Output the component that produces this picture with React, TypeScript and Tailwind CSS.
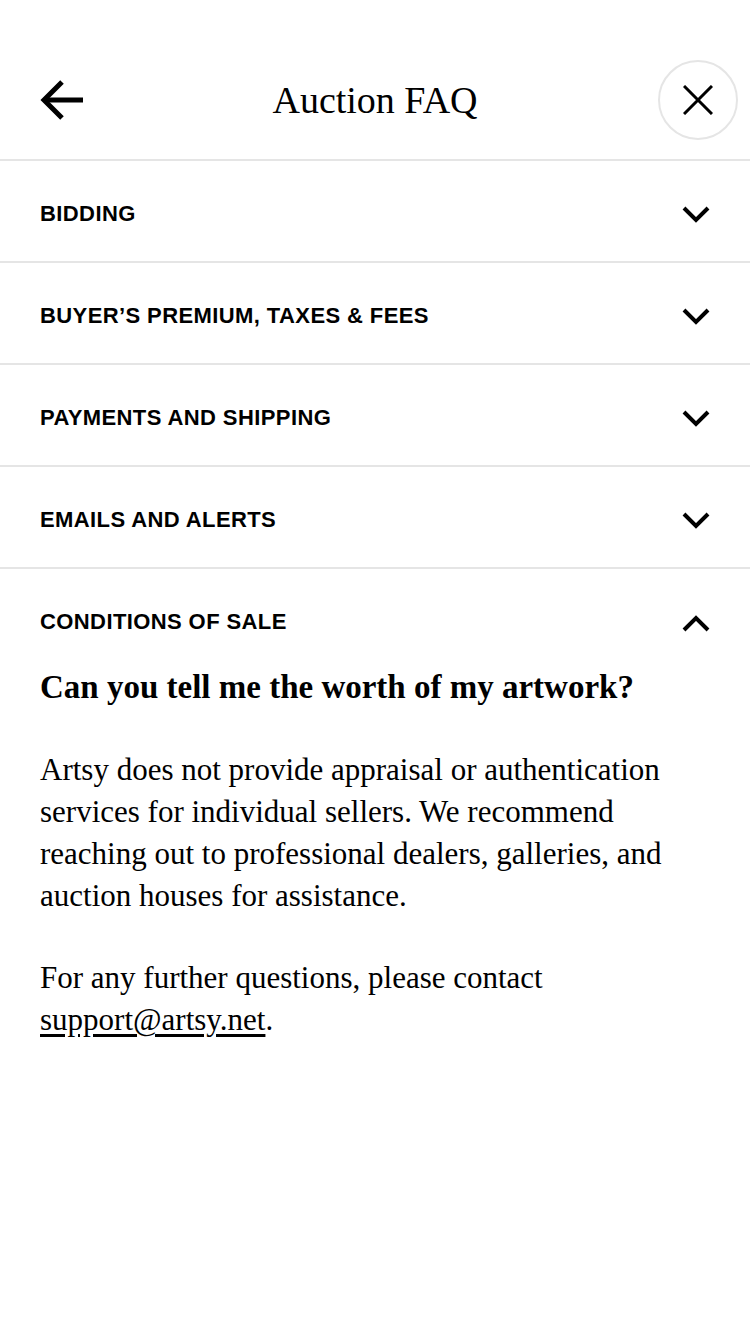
import React, { useState } from 'react'

const serif = "font-['Liberation_Serif',_'DejaVu_Serif',_serif]"
const sans = "font-['Liberation_Sans',_Arial,_sans-serif]"

const SECTIONS = [
  'Bidding',
  'Buyer’s Premium, Taxes & Fees',
  'Payments and Shipping',
  'Emails and Alerts',
  'Conditions of Sale'
]

const Chevron = ({ up }: { up?: boolean }) => (
  <svg width="30" height="20" viewBox="0 0 30 20" fill="none" className="mt-[3px]">
    <path
      d={up ? 'M3 17 L15 5 L27 17' : 'M3 3 L15 15 L27 3'}
      stroke="#000"
      strokeWidth="4"
    />
  </svg>
)

const App = () => {
  const [open, setOpen] = useState<number>(4)

  return (
    <div className="min-h-[1334px] w-[750px] bg-white pt-[40px] text-black">
      {/* header */}
      <div className="relative flex h-[121px] items-center justify-center border-b-2 border-[#e5e5e5]">
        <button className="absolute left-[40px] top-[40px]">
          <svg width="46" height="40" viewBox="0 0 46 40" fill="none">
            <path d="M43 20 H5" stroke="#000" strokeWidth="5" />
            <path d="M22 2 L4 20 L22 38" stroke="#000" strokeWidth="5" />
          </svg>
        </button>
        <h1 className={`${serif} text-[38px] leading-none`}>Auction FAQ</h1>
        <button className="absolute right-[12px] top-[20px] flex h-[80px] w-[80px] items-center justify-center rounded-full border-2 border-[#e5e5e5]">
          <svg width="30" height="30" viewBox="0 0 30 30" fill="none">
            <path d="M1 1 L29 29 M29 1 L1 29" stroke="#000" strokeWidth="3" />
          </svg>
        </button>
      </div>

      {SECTIONS.map((title, i) => {
        const isOpen = open === i
        return (
          <div key={title} className={isOpen ? '' : 'border-b-2 border-[#e5e5e5]'}>
            <button
              onClick={() => setOpen(isOpen ? -1 : i)}
              className="flex h-[100px] w-full items-center justify-between pl-[40px] pr-[39px] pt-[4px] text-left"
            >
              <span className={`${sans} text-[22px] font-bold uppercase tracking-[0.4px]`}>
                {title}
              </span>
              <Chevron up={isOpen} />
            </button>
            {isOpen && (
              <div className={`${serif} pl-[40px] pr-[50px]`}>
                <h2 className="-mt-[2px] text-[33px] font-bold leading-[40px]">
                  Can you tell me the worth of my artwork?
                </h2>
                <p className="mt-[42px] text-[31px] leading-[42px]">
                  Artsy does not provide appraisal or authentication services for individual sellers.
                  We recommend reaching out to professional dealers, galleries, and auction houses
                  for assistance.
                </p>
                <p className="mt-[40px] text-[31px] leading-[42px]">
                  For any further questions, please contact{' '}
                  <a href="#" className="underline underline-offset-4">support@artsy.net</a>.
                </p>
              </div>
            )}
          </div>
        )
      })}
    </div>
  )
}

export default App
